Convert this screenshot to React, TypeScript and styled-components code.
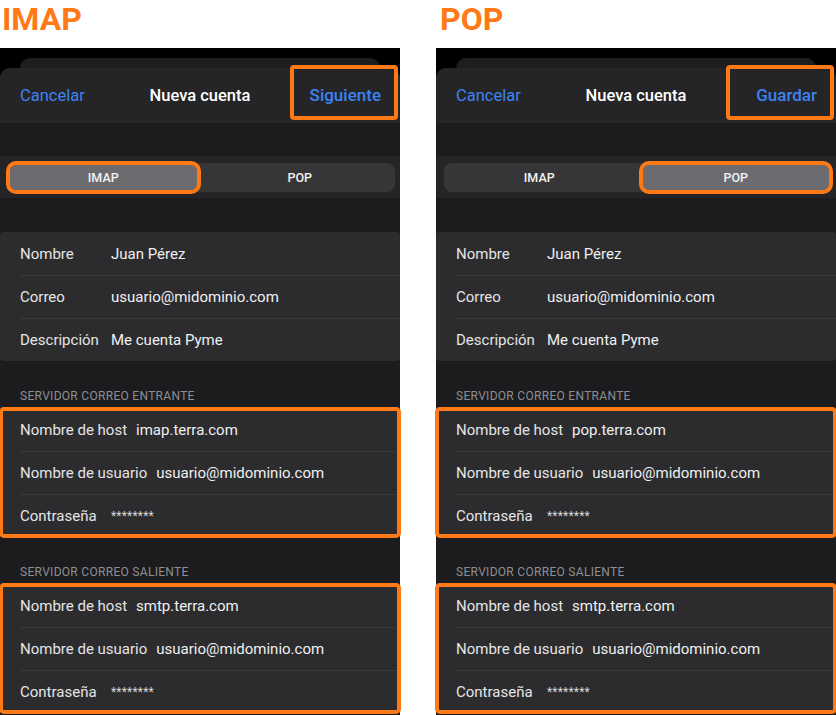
import React from "react";
import styled, { createGlobalStyle, css } from "styled-components";

const ORANGE = "#ff7a17";
const BLUE = "#3c83f0";

const GlobalStyle = createGlobalStyle`
  html, body { margin: 0; padding: 0; background: #ffffff; }
  body { font-family: Roboto, "Noto Sans", sans-serif; -webkit-font-smoothing: antialiased; }
  * { box-sizing: border-box; }
`;

const Page = styled.div`
  display: flex;
  gap: 36px;
  width: 836px;
  height: 715px;
  overflow: hidden;
`;

const Column = styled.section`
  width: 400px;
  display: flex;
  flex-direction: column;
`;

const Title = styled.h1<{ $indent: number }>`
  margin: 0;
  height: 48px;
  padding-left: ${(p) => p.$indent}px;
  font-family: Roboto, "Liberation Sans", sans-serif;
  font-weight: 700;
  font-size: 32px;
  line-height: 38px;
  color: ${ORANGE};
`;

const Phone = styled.div`
  flex: 1;
  background: #000;
  padding-top: 10px;
  display: flex;
  flex-direction: column;
`;

const BackSheet = styled.div`
  height: 10px;
  margin: 0 20px;
  background: #1e1e20;
  border-radius: 10px 10px 0 0;
`;

const Sheet = styled.div`
  flex: 1;
  background: #1c1c1e;
  border-radius: 10px 10px 0 0;
  display: flex;
  flex-direction: column;
`;

const NavBar = styled.header`
  height: 55px;
  display: grid;
  grid-template-columns: 1fr auto 1fr;
  align-items: center;
  background: #252527;
  border-radius: 10px 10px 0 0;
  font-size: 16.5px;
`;

const NavCancel = styled.span`
  padding-left: 20px;
  color: ${BLUE};
`;

const NavTitle = styled.span`
  color: #ffffff;
  font-weight: 500;
  font-size: 16.5px;
`;

const NavAction = styled.span<{ $highlight: boolean }>`
  justify-self: end;
  width: 108px;
  height: 55px;
  margin: -3px 2px 3px 0;
  padding: 5px 17px 0 0;
  display: flex;
  align-items: center;
  justify-content: flex-end;
  color: ${BLUE};
  font-weight: 500;
  font-size: 17px;
  border-radius: 4px;
  ${(p) =>
    p.$highlight &&
    css`
      box-shadow: inset 0 0 0 4px ${ORANGE};
    `}
`;

const SegmentBand = styled.div`
  margin-top: 33px;
  height: 42px;
  padding: 7px 5px 6px 8px;
  background: #252527;
`;

const Segmented = styled.div`
  height: 29px;
  display: grid;
  grid-template-columns: 1fr 1fr;
  gap: 10px;
  padding: 2px;
  background: #363638;
  border-radius: 8px;
`;

const Segment = styled.div<{ $active: boolean; $highlight: boolean }>`
  display: flex;
  align-items: center;
  justify-content: center;
  border-radius: 6px;
  font-size: 12.5px;
  font-weight: 500;
  color: #f2f2f2;
  background: ${(p) => (p.$active ? "#6b6b70" : "transparent")};
  ${(p) =>
    p.$highlight &&
    css`
      outline: 4px solid ${ORANGE};
      outline-offset: 0px;
    `}
`;

const Group = styled.div<{ $highlight?: boolean; $first?: boolean }>`
  margin-top: ${(p) => (p.$first ? "34px" : "0")};
  background: #2c2c2e;
  border-radius: 4px;
  ${(p) =>
    p.$highlight &&
    css`
      outline: 4px solid ${ORANGE};
      outline-offset: -3px;
    `}
`;

const Row = styled.div`
  height: 43px;
  margin-left: 20px;
  padding-right: 20px;
  display: flex;
  align-items: center;
  font-size: 15px;
  & + & {
    border-top: 1px solid #3a3a3c;
  }
`;

const Label = styled.span`
  min-width: 82px;
  margin-right: 9px;
  color: #e4e4e6;
`;

const Value = styled.span<{ $secret?: boolean }>`
  color: #f0f0f2;
  ${(p) =>
    p.$secret &&
    css`
      font-size: 12px;
      letter-spacing: 0.2px;
      color: #d8d8da;
    `}
`;

const SectionHeader = styled.div`
  height: 47px;
  padding: 0 20px 5px;
  display: flex;
  align-items: flex-end;
  font-size: 12px;
  letter-spacing: 0.3px;
  color: #8e8e93;
  text-transform: uppercase;
`;

type Field = { label: string; value: string; secret?: boolean };

type Panel = {
  title: string;
  indent: number;
  action: string;
  mode: "IMAP" | "POP";
  incomingHost: string;
};

const panels: Panel[] = [
  { title: "IMAP", indent: 2, action: "Siguiente", mode: "IMAP", incomingHost: "imap.terra.com" },
  { title: "POP", indent: 4, action: "Guardar", mode: "POP", incomingHost: "pop.terra.com" },
];

const accountFields: Field[] = [
  { label: "Nombre", value: "Juan Pérez" },
  { label: "Correo", value: "usuario@midominio.com" },
  { label: "Descripción", value: "Me cuenta Pyme" },
];

const serverFields = (host: string): Field[] => [
  { label: "Nombre de host", value: host },
  { label: "Nombre de usuario", value: "usuario@midominio.com" },
  { label: "Contraseña", value: "********", secret: true },
];

const Rows = ({ fields }: { fields: Field[] }) => (
  <>
    {fields.map((f) => (
      <Row key={f.label}>
        <Label>{f.label}</Label>
        <Value $secret={f.secret}>{f.value}</Value>
      </Row>
    ))}
  </>
);

const AccountPanel = ({ panel }: { panel: Panel }) => (
  <Column>
    <Title $indent={panel.indent}>{panel.title}</Title>
    <Phone>
      <BackSheet />
      <Sheet>
        <NavBar>
          <NavCancel>Cancelar</NavCancel>
          <NavTitle>Nueva cuenta</NavTitle>
          <NavAction $highlight>{panel.action}</NavAction>
        </NavBar>
        <SegmentBand>
          <Segmented>
            {(["IMAP", "POP"] as const).map((m) => (
              <Segment key={m} $active={m === panel.mode} $highlight={m === panel.mode}>
                {m}
              </Segment>
            ))}
          </Segmented>
        </SegmentBand>
        <Group $first>
          <Rows fields={accountFields} />
        </Group>
        <SectionHeader>Servidor correo entrante</SectionHeader>
        <Group $highlight>
          <Rows fields={serverFields(panel.incomingHost)} />
        </Group>
        <SectionHeader>Servidor correo saliente</SectionHeader>
        <Group $highlight>
          <Rows fields={serverFields("smtp.terra.com")} />
        </Group>
      </Sheet>
    </Phone>
  </Column>
);

export default function App() {
  return (
    <>
      <GlobalStyle />
      <Page>
        {panels.map((p) => (
          <AccountPanel key={p.title} panel={p} />
        ))}
      </Page>
    </>
  );
}
